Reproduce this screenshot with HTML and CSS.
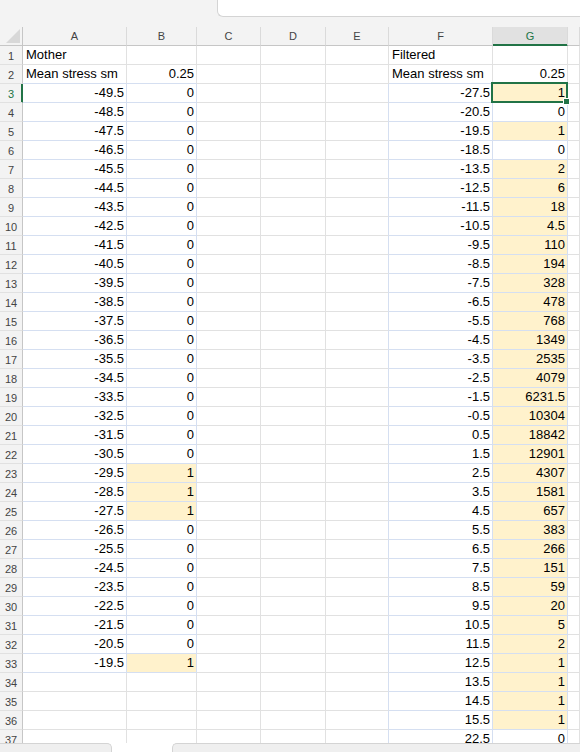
FILE: index.html
```html
<!DOCTYPE html>
<html lang="en">
<head>
<meta charset="utf-8">
<title>Mean stress</title>
<link rel="stylesheet" href="styles.css">
</head>
<body>
<div class="app">
  <div class="topbar"><div class="formula"></div></div>
  <div class="sheet">
    <div class="row hdr">
      <div class="corner"><svg width="14" height="14" viewBox="0 0 14 14"><polygon points="14,0 14,14 0,14" fill="#d8d8d8"/></svg></div>
      <div>A</div><div>B</div><div>C</div><div>D</div><div>E</div><div>F</div><div class="sel">G</div><div></div>
    </div>
    <div class="row"><div class="rh">1</div><div>Mother</div><div></div><div></div><div></div><div></div><div>Filtered</div><div></div><div></div></div>
    <div class="row"><div class="rh">2</div><div class="bb">Mean stress sm</div><div class="n bb">0.25</div><div></div><div></div><div></div><div class="bb">Mean stress sm</div><div class="n bb">0.25</div><div></div></div>
    <div class="row"><div class="rh on">3</div><div class="n b">-49.5</div><div class="n b">0</div><div></div><div></div><div class="br"></div><div class="n b">-27.5</div><div class="n b hl active">1<span class="handle"></span></div><div></div></div>
    <div class="row"><div class="rh">4</div><div class="n b">-48.5</div><div class="n b">0</div><div></div><div></div><div class="br"></div><div class="n b">-20.5</div><div class="n b">0</div><div></div></div>
    <div class="row"><div class="rh">5</div><div class="n b">-47.5</div><div class="n b">0</div><div></div><div></div><div class="br"></div><div class="n b">-19.5</div><div class="n b hl">1</div><div></div></div>
    <div class="row"><div class="rh">6</div><div class="n b">-46.5</div><div class="n b">0</div><div></div><div></div><div class="br"></div><div class="n b">-18.5</div><div class="n b">0</div><div></div></div>
    <div class="row"><div class="rh">7</div><div class="n b">-45.5</div><div class="n b">0</div><div></div><div></div><div class="br"></div><div class="n b">-13.5</div><div class="n b hl">2</div><div></div></div>
    <div class="row"><div class="rh">8</div><div class="n b">-44.5</div><div class="n b">0</div><div></div><div></div><div class="br"></div><div class="n b">-12.5</div><div class="n b hl">6</div><div></div></div>
    <div class="row"><div class="rh">9</div><div class="n b">-43.5</div><div class="n b">0</div><div></div><div></div><div class="br"></div><div class="n b">-11.5</div><div class="n b hl">18</div><div></div></div>
    <div class="row"><div class="rh">10</div><div class="n b">-42.5</div><div class="n b">0</div><div></div><div></div><div class="br"></div><div class="n b">-10.5</div><div class="n b hl">4.5</div><div></div></div>
    <div class="row"><div class="rh">11</div><div class="n b">-41.5</div><div class="n b">0</div><div></div><div></div><div class="br"></div><div class="n b">-9.5</div><div class="n b hl">110</div><div></div></div>
    <div class="row"><div class="rh">12</div><div class="n b">-40.5</div><div class="n b">0</div><div></div><div></div><div class="br"></div><div class="n b">-8.5</div><div class="n b hl">194</div><div></div></div>
    <div class="row"><div class="rh">13</div><div class="n b">-39.5</div><div class="n b">0</div><div></div><div></div><div class="br"></div><div class="n b">-7.5</div><div class="n b hl">328</div><div></div></div>
    <div class="row"><div class="rh">14</div><div class="n b">-38.5</div><div class="n b">0</div><div></div><div></div><div class="br"></div><div class="n b">-6.5</div><div class="n b hl">478</div><div></div></div>
    <div class="row"><div class="rh">15</div><div class="n b">-37.5</div><div class="n b">0</div><div></div><div></div><div class="br"></div><div class="n b">-5.5</div><div class="n b hl">768</div><div></div></div>
    <div class="row"><div class="rh">16</div><div class="n b">-36.5</div><div class="n b">0</div><div></div><div></div><div class="br"></div><div class="n b">-4.5</div><div class="n b hl">1349</div><div></div></div>
    <div class="row"><div class="rh">17</div><div class="n b">-35.5</div><div class="n b">0</div><div></div><div></div><div class="br"></div><div class="n b">-3.5</div><div class="n b hl">2535</div><div></div></div>
    <div class="row"><div class="rh">18</div><div class="n b">-34.5</div><div class="n b">0</div><div></div><div></div><div class="br"></div><div class="n b">-2.5</div><div class="n b hl">4079</div><div></div></div>
    <div class="row"><div class="rh">19</div><div class="n b">-33.5</div><div class="n b">0</div><div></div><div></div><div class="br"></div><div class="n b">-1.5</div><div class="n b hl">6231.5</div><div></div></div>
    <div class="row"><div class="rh">20</div><div class="n b">-32.5</div><div class="n b">0</div><div></div><div></div><div class="br"></div><div class="n b">-0.5</div><div class="n b hl">10304</div><div></div></div>
    <div class="row"><div class="rh">21</div><div class="n b">-31.5</div><div class="n b">0</div><div></div><div></div><div class="br"></div><div class="n b">0.5</div><div class="n b hl">18842</div><div></div></div>
    <div class="row"><div class="rh">22</div><div class="n b">-30.5</div><div class="n b">0</div><div></div><div></div><div class="br"></div><div class="n b">1.5</div><div class="n b hl">12901</div><div></div></div>
    <div class="row"><div class="rh">23</div><div class="n b">-29.5</div><div class="n b hl">1</div><div></div><div></div><div class="br"></div><div class="n b">2.5</div><div class="n b hl">4307</div><div></div></div>
    <div class="row"><div class="rh">24</div><div class="n b">-28.5</div><div class="n b hl">1</div><div></div><div></div><div class="br"></div><div class="n b">3.5</div><div class="n b hl">1581</div><div></div></div>
    <div class="row"><div class="rh">25</div><div class="n b">-27.5</div><div class="n b hl">1</div><div></div><div></div><div class="br"></div><div class="n b">4.5</div><div class="n b hl">657</div><div></div></div>
    <div class="row"><div class="rh">26</div><div class="n b">-26.5</div><div class="n b">0</div><div></div><div></div><div class="br"></div><div class="n b">5.5</div><div class="n b hl">383</div><div></div></div>
    <div class="row"><div class="rh">27</div><div class="n b">-25.5</div><div class="n b">0</div><div></div><div></div><div class="br"></div><div class="n b">6.5</div><div class="n b hl">266</div><div></div></div>
    <div class="row"><div class="rh">28</div><div class="n b">-24.5</div><div class="n b">0</div><div></div><div></div><div class="br"></div><div class="n b">7.5</div><div class="n b hl">151</div><div></div></div>
    <div class="row"><div class="rh">29</div><div class="n b">-23.5</div><div class="n b">0</div><div></div><div></div><div class="br"></div><div class="n b">8.5</div><div class="n b hl">59</div><div></div></div>
    <div class="row"><div class="rh">30</div><div class="n b">-22.5</div><div class="n b">0</div><div></div><div></div><div class="br"></div><div class="n b">9.5</div><div class="n b hl">20</div><div></div></div>
    <div class="row"><div class="rh">31</div><div class="n b">-21.5</div><div class="n b">0</div><div></div><div></div><div class="br"></div><div class="n b">10.5</div><div class="n b hl">5</div><div></div></div>
    <div class="row"><div class="rh">32</div><div class="n b">-20.5</div><div class="n b">0</div><div></div><div></div><div class="br"></div><div class="n b">11.5</div><div class="n b hl">2</div><div></div></div>
    <div class="row"><div class="rh">33</div><div class="n b">-19.5</div><div class="n b hl">1</div><div></div><div></div><div class="br"></div><div class="n b">12.5</div><div class="n b hl">1</div><div></div></div>
    <div class="row"><div class="rh">34</div><div></div><div></div><div></div><div></div><div class="br"></div><div class="n b">13.5</div><div class="n b hl">1</div><div></div></div>
    <div class="row"><div class="rh">35</div><div></div><div></div><div></div><div></div><div class="br"></div><div class="n b">14.5</div><div class="n b hl">1</div><div></div></div>
    <div class="row"><div class="rh">36</div><div></div><div></div><div></div><div></div><div class="br"></div><div class="n b">15.5</div><div class="n b hl">1</div><div></div></div>
    <div class="row"><div class="rh">37</div><div></div><div></div><div></div><div></div><div class="br"></div><div class="n b">22.5</div><div class="n b">0</div><div></div></div>
  </div>
  <div class="tabs">
    <div class="tab-nav"></div>
    <div class="tab-active"></div>
    <div class="hscroll"></div>
  </div>
</div>
</body>
</html>
```
FILE: styles.css
```css
* { box-sizing: border-box; }

html, body { margin: 0; padding: 0; }

body {
  font-family: "Liberation Sans", Arial, sans-serif;
  font-size: 13px;
  color: #000;
  background: #fff;
}

.app {
  width: 580px;
  height: 752px;
  display: flex;
  flex-direction: column;
  overflow: hidden;
}

/* formula bar strip */
.topbar {
  flex: none;
  height: 27px;
  display: flex;
  background: #f3f3f3;
}

.formula {
  flex: 1;
  margin-left: 217px;
  height: 17px;
  background: #fff;
  border-left: 1px solid #d4d4d4;
  border-bottom: 1px solid #d4d4d4;
  border-bottom-left-radius: 6px;
}

/* grid of cells */
.sheet {
  flex: 1;
  overflow: hidden;
}

.row {
  display: grid;
  grid-template-columns: 23px 104px 70px 64px 65px 63px 104px 75px 1fr;
  height: 19px;
}

.row > div {
  border-right: 1px solid #e1e1e1;
  border-bottom: 1px solid #e1e1e1;
  line-height: 18px;
  padding: 0 2px 0 3px;
  white-space: nowrap;
  overflow: hidden;
}

.row > .n { text-align: right; }

/* data region gridlines */
.row > .b { border-right-color: #d5dff1; border-bottom-color: #d5dff1; }
.row > .br { border-right-color: #d5dff1; }
.row > .bb { border-bottom-color: #d5dff1; }

.row > .hl { background: #fff2cc; }

/* column header row */
.hdr { background: #f3f3f3; }

.hdr > div {
  text-align: center;
  font-size: 11px;
  color: #444;
  padding: 0;
  line-height: 19px;
  border-right-color: #dadada;
  border-bottom-color: #c6c6c6;
}

.hdr > .corner {
  display: flex;
  align-items: flex-end;
  justify-content: flex-end;
  padding: 0 2px 2px 0;
  border-right-color: #c6c6c6;
}

.corner svg { display: block; }

.hdr > .sel {
  background: #e1e1e1;
  color: #217346;
  border-bottom-color: #217346;
  box-shadow: inset 0 -1px 0 #217346;
}

/* row numbers */
.row > .rh {
  background: #f3f3f3;
  text-align: center;
  font-size: 11px;
  color: #444;
  padding: 0;
  line-height: 20px;
  border-right-color: #c6c6c6;
}

.row > .rh.on {
  color: #217346;
  border-right-color: #217346;
  box-shadow: inset -1px 0 0 #217346;
}

/* active cell outline and fill handle */
.row > .active {
  position: relative;
  overflow: visible;
}

.active::after {
  content: "";
  position: absolute;
  left: -2px;
  top: -2px;
  right: -1px;
  bottom: -1px;
  border: 2px solid #217346;
  z-index: 2;
  pointer-events: none;
}

.handle {
  position: absolute;
  right: -3px;
  bottom: -3px;
  width: 7px;
  height: 7px;
  background: #217346;
  border: 1px solid #fff;
  z-index: 3;
}

/* sheet tabs and horizontal scroll strip */
.tabs {
  flex: none;
  height: 9px;
  display: flex;
  background: #fff;
}

.tab-nav {
  width: 112px;
  background: #efefef;
  border-top: 1px solid #d4d4d4;
  border-right: 1px solid #d4d4d4;
  border-top-right-radius: 5px;
}

.tab-active {
  width: 60px;
  background: #fff;
}

.hscroll {
  flex: 1;
  background: #efefef;
  border-top: 1px solid #d4d4d4;
  border-left: 1px solid #d4d4d4;
  border-top-left-radius: 5px;
}
```
